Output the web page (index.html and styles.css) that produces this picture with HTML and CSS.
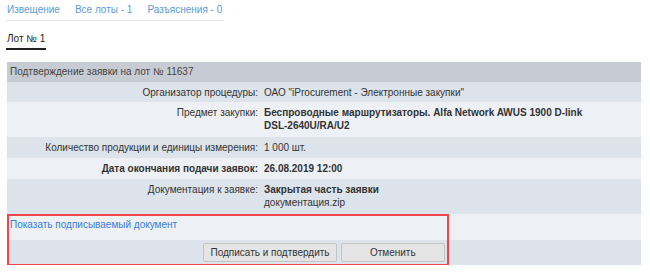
FILE: index.html
```html
<!DOCTYPE html>
<html>
<head>
<meta charset="UTF-8">
<title>Подтверждение заявки</title>
<link rel="stylesheet" href="styles.css">
</head>
<body>

<div class="page">
  <nav class="tabs">
    <a href="#" class="tab-link">Извещение</a>
    <a href="#" class="tab-link">Все лоты - 1</a>
    <a href="#" class="tab-link">Разъяснения - 0</a>
  </nav>

  <div class="lot-tabs">
    <span class="lot-tab">Лот № 1</span>
  </div>

  <div class="form-wrap">
    <table class="app-table">
      <colgroup>
        <col class="col-label">
        <col>
      </colgroup>
      <thead>
        <tr class="row-head">
          <th colspan="2">Подтверждение заявки на лот № 11637</th>
        </tr>
      </thead>
      <tbody>
        <tr class="dark row-20">
          <td class="label">Организатор процедуры:</td>
          <td class="value">ОАО "iProcurement - Электронные закупки"</td>
        </tr>
        <tr class="light row-35">
          <td class="label">Предмет закупки:</td>
          <td class="value"><b>Беспроводные маршрутизаторы. Alfa Network AWUS 1900 D-link DSL-2640U/RA/U2</b></td>
        </tr>
        <tr class="dark row-21">
          <td class="label">Количество продукции и единицы измерения:</td>
          <td class="value">1 000 шт.</td>
        </tr>
        <tr class="light row-21">
          <td class="label"><b>Дата окончания подачи заявок:</b></td>
          <td class="value"><b>26.08.2019 12:00</b></td>
        </tr>
        <tr class="dark row-35">
          <td class="label">Документация к заявке:</td>
          <td class="value"><b>Закрытая часть заявки</b><br>документация.zip</td>
        </tr>
        <tr class="light row-26">
          <td colspan="2" class="link-cell"><a href="#" class="doc-link">Показать подписываемый документ</a></td>
        </tr>
        <tr class="dark row-25">
          <td colspan="2" class="actions">
            <button class="btn btn-sign">Подписать и подтвердить</button>
            <button class="btn btn-cancel">Отменить</button>
          </td>
        </tr>
      </tbody>
    </table>
    <div class="highlight"></div>
  </div>
</div>

</body>
</html>
```

FILE: styles.css
```css
body {
  margin: 0;
  padding: 0;
  font-family: "Liberation Sans", Arial, sans-serif;
  font-size: 10px;
  color: #333;
  background-color: #fff;
}

.page {
  padding: 3px 9px 0 7px;
}

.tabs {
  display: inline-flex;
  gap: 15px;
  margin-left: -1px;
  padding: 0 2px 4px 1px;
  border-bottom: 1px solid #e6e6e6;
  white-space: nowrap;
}

.tab-link {
  color: #5b9bd5;
  text-decoration: none;
  font-size: 10px;
  line-height: 13px;
}

.lot-tabs {
  margin-top: 11px;
}

.lot-tab {
  display: inline-block;
  color: #222;
  font-size: 10px;
  line-height: 13px;
  margin-left: -1px;
  padding: 0 1px 3px 1px;
  border-bottom: 2px solid #222;
}

.form-wrap {
  position: relative;
  margin-top: 12px;
}

.app-table {
  width: 100%;
  border-collapse: collapse;
  table-layout: fixed;
  font-size: 10px;
}

.col-label {
  width: 254px;
}

.row-head { height: 20px; }
.row-20 { height: 20px; }
.row-21 { height: 21px; }
.row-35 { height: 35px; }
.row-26 { height: 26px; }
.row-25 { height: 25px; }

.app-table th {
  background-color: #c7ccd4;
  color: #444;
  text-align: left;
  font-weight: normal;
  padding: 3px 3px 0 3px;
  line-height: 13px;
  vertical-align: top;
}

.app-table td {
  padding: 4px 3px 0 3px;
  line-height: 13px;
  vertical-align: top;
}

.dark td {
  background-color: #dde3ea;
}

.light td {
  background-color: #edf0f4;
}

.label {
  text-align: right;
}

.app-table .value {
  padding-right: 40px;
}

.doc-link {
  color: #3b7dd8;
  text-decoration: none;
}

.app-table .actions {
  padding: 3px 0 0 196px;
}

.btn {
  font-family: "Liberation Sans", Arial, sans-serif;
  font-size: 10px;
  color: #333;
  height: 19px;
  padding: 0 4px;
  background-color: #e4e4e4;
  border: 1px solid #c4c4c4;
  border-radius: 2px;
  margin: 0;
  white-space: nowrap;
  vertical-align: top;
}

.btn-sign {
  width: 134px;
}

.btn-cancel {
  width: 104px;
  margin-left: 1px;
}

.highlight {
  position: absolute;
  left: 0;
  top: 152px;
  width: 442px;
  height: 52px;
  box-sizing: border-box;
  border: 2px solid #f0454d;
}
```
